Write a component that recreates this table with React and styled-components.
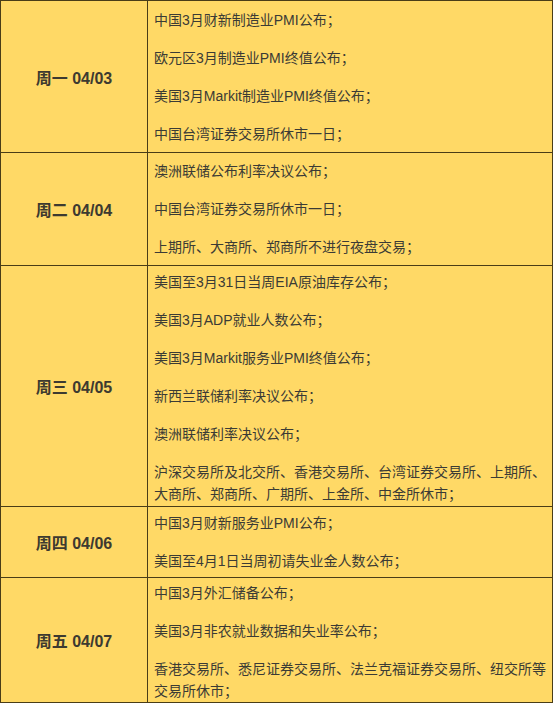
import React from "react";
import styled, { createGlobalStyle } from "styled-components";

const GlobalStyle = createGlobalStyle`
  html, body {
    margin: 0;
    padding: 0;
    background: #ffffff;
  }
`;

const Table = styled.div`
  width: 553px;
  box-sizing: border-box;
  background: #ffd966;
  border-top: 1px solid #4a3d17;
  border-left: 1px solid #4a3d17;
  border-right: 1px solid #4a3d17;
  font-family: "Liberation Sans", "Noto Sans CJK SC", sans-serif;
  color: #3b3b35;
`;

const Row = styled.div`
  display: grid;
  grid-template-columns: 147px 1fr;
  height: ${(p) => p.h}px;
  box-sizing: border-box;
  border-bottom: 1px solid #4a3d17;
`;

const DayCell = styled.div`
  display: flex;
  align-items: center;
  justify-content: center;
  border-right: 1px solid #4a3d17;
  font-size: 16px;
  font-weight: bold;
  color: #3d3a30;
`;

const EventCell = styled.div`
  padding: ${(p) => p.top}px 2px 0 6px;
  font-size: 14px;
  line-height: 22px;
`;

const Item = styled.p`
  margin: 0 0 16px;
  &:last-child {
    margin-bottom: 0;
  }
`;

const schedule = [
  {
    day: "周一 04/03",
    h: 152,
    top: 8,
    items: [
      "中国3月财新制造业PMI公布；",
      "欧元区3月制造业PMI终值公布；",
      "美国3月Markit制造业PMI终值公布；",
      "中国台湾证券交易所休市一日；",
    ],
  },
  {
    day: "周二 04/04",
    h: 113,
    top: 7,
    items: [
      "澳洲联储公布利率决议公布；",
      "中国台湾证券交易所休市一日；",
      "上期所、大商所、郑商所不进行夜盘交易；",
    ],
  },
  {
    day: "周三 04/05",
    h: 241,
    top: 5,
    items: [
      "美国至3月31日当周EIA原油库存公布；",
      "美国3月ADP就业人数公布；",
      "美国3月Markit服务业PMI终值公布；",
      "新西兰联储利率决议公布；",
      "澳洲联储利率决议公布；",
      "沪深交易所及北交所、香港交易所、台湾证券交易所、上期所、大商所、郑商所、广期所、上金所、中金所休市；",
    ],
  },
  {
    day: "周四 04/06",
    h: 71,
    top: 5,
    items: ["中国3月财新服务业PMI公布；", "美国至4月1日当周初请失业金人数公布；"],
  },
  {
    day: "周五 04/07",
    h: 125,
    top: 4,
    items: [
      "中国3月外汇储备公布；",
      "美国3月非农就业数据和失业率公布；",
      "香港交易所、悉尼证券交易所、法兰克福证券交易所、纽交所等交易所休市；",
    ],
  },
];

export default function App() {
  return (
    <>
      <GlobalStyle />
      <Table>
        {schedule.map((row) => (
          <Row key={row.day} h={row.h}>
            <DayCell>{row.day}</DayCell>
            <EventCell top={row.top}>
              {row.items.map((t) => (
                <Item key={t}>{t}</Item>
              ))}
            </EventCell>
          </Row>
        ))}
      </Table>
    </>
  );
}
